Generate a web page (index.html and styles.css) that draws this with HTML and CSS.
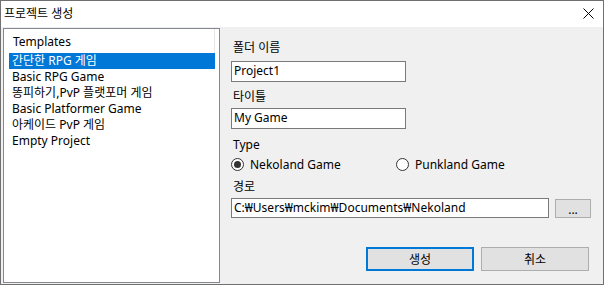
FILE: index.html
```html
<!DOCTYPE html>
<html lang="ko">

<head>
  <meta charset="UTF-8" />
  <title>프로젝트 생성</title>
  <link rel="stylesheet" href="styles.css">
</head>

<body>
  <div class="window">
    <div class="titlebar">
      <div class="title">프로젝트 생성</div>
      <svg class="close" width="11" height="11" viewBox="0 0 11 11">
        <path d="M0.5 0.5 L10.5 10.5 M10.5 0.5 L0.5 10.5" stroke="#000" stroke-width="1" fill="none" />
      </svg>
    </div>

    <div class="content">
      <div class="list">
        <div class="list-header"><span>Templates</span></div>
        <div class="row selected">간단한 RPG 게임</div>
        <div class="row">Basic RPG Game</div>
        <div class="row">똥피하기,PvP 플랫포머 게임</div>
        <div class="row">Basic Platformer Game</div>
        <div class="row">아케이드 PvP 게임</div>
        <div class="row">Empty Project</div>
      </div>

      <div class="form">
        <div class="label first">폴더 이름</div>
        <div class="input short">Project1</div>

        <div class="label second">타이틀</div>
        <div class="input short">My Game</div>

        <div class="label type">Type</div>
        <div class="radios">
          <div class="radio">
            <span class="circle checked"></span>
            <span>Nekoland Game</span>
          </div>
          <div class="radio">
            <span class="circle"></span>
            <span>Punkland Game</span>
          </div>
        </div>

        <div class="label path">경로</div>
        <div class="path-row">
          <div class="input long">C:₩Users₩mckim₩Documents₩Nekoland</div>
          <div class="btn small">...</div>
        </div>

        <div class="actions">
          <div class="btn default">생성</div>
          <div class="btn">취소</div>
        </div>
      </div>
    </div>
  </div>
</body>

</html>
```

FILE: styles.css
```css
body {
  margin: 0;
  font-family: "Noto Sans", "Noto Sans CJK KR", sans-serif;
  font-size: 12px;
  color: #000;
}

.window {
  width: 604px;
  height: 285px;
  box-sizing: border-box;
  border: 1px solid #707070;
  background: #f0f0f0;
  display: flex;
  flex-direction: column;
}

.titlebar {
  height: 26px;
  flex: none;
  background: #fff;
  display: flex;
  align-items: center;
  justify-content: space-between;
  padding: 0 9px 0 3px;
}

.title {
  line-height: 16px;
  padding-bottom: 1px;
}

.close {
  display: block;
  margin-bottom: 1px;
}

.content {
  flex: 1;
  display: flex;
  padding: 1px 2px 1px 2px;
}

.list {
  width: 217px;
  flex: none;
  box-sizing: border-box;
  border: 1px solid #828790;
  background: #fff;
}

.list-header {
  height: 24px;
  width: 211px;
  box-sizing: border-box;
  border-right: 1px solid #e5e5e5;
  display: flex;
  align-items: center;
  padding-left: 9px;
}

.row {
  margin-left: 5px;
  width: 206px;
  height: 16px;
  line-height: 16px;
  padding-left: 3px;
  box-sizing: border-box;
  white-space: nowrap;
}

.row.selected {
  background: #0078d7;
  color: #fff;
}

.form {
  flex: 1;
  display: flex;
  flex-direction: column;
  padding-left: 11px;
}

.label {
  height: 16px;
  line-height: 16px;
  padding-left: 2px;
}

.label.first {
  margin-top: 12px;
  margin-bottom: 5px;
}

.label.second {
  margin-top: 7px;
  margin-bottom: 3px;
}

.label.type {
  margin-top: 8px;
  margin-bottom: 3px;
}

.label.path {
  margin-top: 7px;
  margin-bottom: 3px;
}

.input {
  height: 21px;
  box-sizing: border-box;
  border: 1px solid #7a7a7a;
  background: #fff;
  line-height: 18px;
  padding-left: 2px;
  white-space: nowrap;
}

.input.short {
  width: 175px;
}

.radios {
  display: flex;
  height: 16px;
  align-items: center;
}

.radio {
  display: flex;
  align-items: center;
  gap: 6px;
  width: 165px;
}

.circle {
  width: 13px;
  height: 13px;
  box-sizing: border-box;
  border: 1px solid #333;
  border-radius: 50%;
  background: #fff;
  display: flex;
  align-items: center;
  justify-content: center;
}

.circle.checked::after {
  content: "";
  width: 7px;
  height: 7px;
  border-radius: 50%;
  background: #333;
}

.path-row {
  display: flex;
  align-items: center;
  gap: 6px;
}

.input.long {
  width: 318px;
  height: 20px;
  line-height: 17px;
}

.btn {
  box-sizing: border-box;
  background: #e1e1e1;
  border: 1px solid #adadad;
  display: flex;
  align-items: center;
  justify-content: center;
  width: 108px;
  height: 24px;
}

.btn.small {
  width: 36px;
  height: 19px;
  line-height: 12px;
  padding-top: 4px;
}

.btn.default {
  border: 2px solid #0078d7;
}

.actions {
  display: flex;
  gap: 7px;
  justify-content: flex-end;
  margin-top: 29px;
  margin-right: 12px;
}
```
